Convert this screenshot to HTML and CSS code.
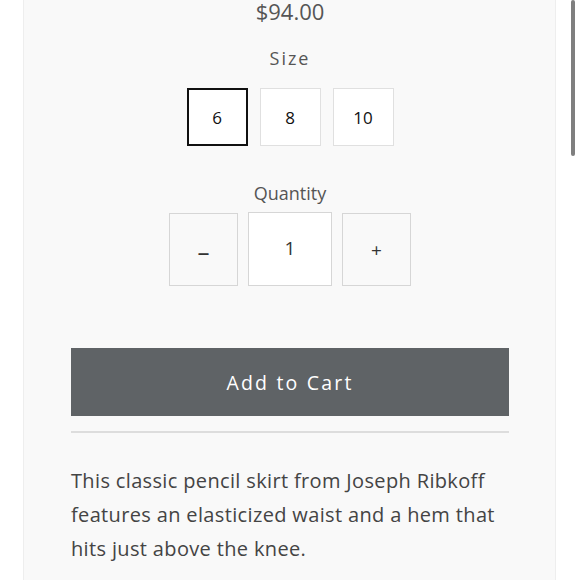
FILE: index.html
```html
<!DOCTYPE html>
<html lang="en">
<head>
<meta charset="utf-8">
<title>Pencil Skirt</title>
<link rel="stylesheet" href="styles.css">
</head>
<body>
<div class="page">
  <div class="product">
    <div class="price">$94.00</div>
    <div class="option">
      <div class="label label-size">Size</div>
      <div class="sizes">
        <button class="size selected">6</button>
        <button class="size">8</button>
        <button class="size">10</button>
      </div>
    </div>
    <div class="option">
      <div class="label label-qty">Quantity</div>
      <div class="qty">
        <button class="qty-btn minus">&ndash;</button>
        <div class="qty-input">1</div>
        <button class="qty-btn">+</button>
      </div>
    </div>
    <button class="cart">Add to Cart</button>
    <hr class="rule">
    <p class="desc">This classic pencil skirt from Joseph Ribkoff features an elasticized waist and a hem that hits just above the knee.</p>
  </div>
</div>
<div class="scrollbar"></div>
</body>
</html>
```
FILE: styles.css
```css
html, body {
  margin: 0;
  padding: 0;
  background: #ffffff;
  height: 100%;
  overflow: hidden;
}
body {
  font-family: "Open Sans", Lato, sans-serif;
  color: #444;
}
.page {
  margin-left: 23px;
  width: 531px;
  min-height: 580px;
  background: #f9f9f9;
  border-left: 1px solid #eeeeee;
  border-right: 1px solid #eeeeee;
}
.product {
  padding: 0 46px 0 47px;
  display: flex;
  flex-direction: column;
  align-items: center;
}
.price {
  font-size: 22px;
  line-height: 22px;
  color: #555;
  margin-top: 0;
}
.option {
  display: flex;
  flex-direction: column;
  align-items: center;
}
.label {
  color: #555;
  font-size: 18px;
}
.label-size {
  letter-spacing: 2px;
  line-height: 24px;
  margin-top: 24px;
}
.label-qty {
  font-size: 18px;
  line-height: 22px;
  margin-top: 36px;
}
.sizes {
  display: flex;
  gap: 12px;
  margin-top: 18px;
}
.size {
  width: 61px;
  height: 58px;
  background: #fff;
  border: 1px solid #e0e0e0;
  font-family: inherit;
  font-size: 17px;
  color: #111;
  padding: 0;
}
.size.selected {
  border: 2px solid #111;
}
.qty {
  display: flex;
  gap: 10px;
  align-items: flex-start;
  margin-top: 8px;
}
.qty-btn {
  width: 69px;
  height: 73px;
  background: #f9f9f9;
  border: 1px solid #d6d6d6;
  font-family: inherit;
  font-size: 19px;
  color: #333;
  padding: 0;
  margin-top: 1px;
}
.qty-btn.minus {
  font-size: 24px;
  padding-top: 4px;
}
.qty-input {
  width: 82px;
  height: 70px;
  background: #fff;
  border: 1px solid #d6d6d6;
  font-size: 19px;
  color: #333;
  display: flex;
  align-items: center;
  justify-content: center;
  padding-bottom: 2px;
  box-sizing: content-box;
}
.cart {
  align-self: stretch;
  height: 68px;
  margin-top: 62px;
  background: #5f6366;
  border: none;
  color: #fff;
  font-family: inherit;
  font-size: 19.5px;
  letter-spacing: 2.2px;
}
.rule {
  align-self: stretch;
  border: none;
  border-top: 2px solid #dddddd;
  margin: 15px 0 0;
}
.desc {
  align-self: stretch;
  margin: 31px 0 0;
  font-size: 20px;
  letter-spacing: 0.35px;
  line-height: 34px;
  color: #444;
}
.scrollbar {
  position: absolute;
  top: 0;
  left: 571px;
  width: 4px;
  height: 156px;
  background: #7f7f7f;
  border-radius: 2px;
}
```
